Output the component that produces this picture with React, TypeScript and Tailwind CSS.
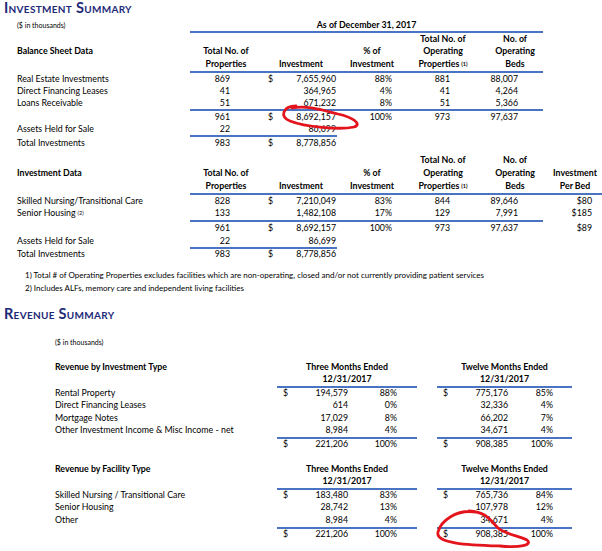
import React from "react";

// investment tables: pad | label | properties | $ investment | % | op. properties | beds | per bed
const ICOLS = "grid grid-cols-[17px_173px_72px_78px_64px_78px_66px_54px] items-center";
// revenue tables: pad | label | 3m value | 3m % | gap | 12m value | 12m % | pad
const RCOLS = "grid grid-cols-[55px_222px_71px_69px_20px_71px_64px_30px] items-center";

const line = "bg-[#4a73c4]";

function Sup({ n }: { n: string }) {
  return <sup className="text-[5.5px] relative -top-[1px] ml-[2px]">{n}</sup>;
}

function InvRow({ h, label, props, dollar, inv, pct, opp, beds, perBed }: any) {
  return (
    <div className={`${ICOLS} ${h}`}>
      <div />
      <div>{label}</div>
      <div className="text-right pr-[32px]">{props}</div>
      <div className="flex justify-between pl-[6px] pr-[4px]">
        <span>{dollar}</span>
        <span>{inv}</span>
      </div>
      <div className="text-right pr-[12px]">{pct}</div>
      <div className="text-right pr-[32px]">{opp}</div>
      <div className="text-right pr-[30px]">{beds}</div>
      <div className="text-right pr-[10px]">{perBed}</div>
    </div>
  );
}

function HeadRow({ h, cells }: { h: string; cells: React.ReactNode[] }) {
  return (
    <div className={`${ICOLS} ${h} font-bold`}>
      <div />
      <div>{cells[0]}</div>
      {cells.slice(1).map((c, i) => (
        <div key={i} className="text-center">{c}</div>
      ))}
    </div>
  );
}

function RevRow({ h, label, d1, v1, p1, d2, v2, p2 }: any) {
  return (
    <div className={`${RCOLS} ${h}`}>
      <div />
      <div>{label}</div>
      <div className="flex justify-between pl-[6px]">
        <span>{d1}</span>
        <span>{v1}</span>
      </div>
      <div className="text-right pr-[20px]">{p1}</div>
      <div />
      <div className="flex justify-between pl-[6px]">
        <span>{d2}</span>
        <span>{v2}</span>
      </div>
      <div className="text-right pr-[19px]">{p2}</div>
      <div />
    </div>
  );
}

function RevHead({ label, top, bottom }: { label?: string; top: string; bottom: string }) {
  return (
    <>
      <div className={`${RCOLS} h-[12px] font-bold`}>
        <div />
        <div>{label}</div>
        <div className="col-span-2 text-center">{top}</div>
        <div />
        <div className="col-span-2 text-center">{bottom}</div>
        <div />
      </div>
      <div className={`${RCOLS} h-[13px] font-bold`}>
        <div />
        <div />
        <div className="col-span-2 text-center">12/31/2017</div>
        <div />
        <div className="col-span-2 text-center">12/31/2017</div>
        <div />
      </div>
    </>
  );
}

function RevLine() {
  return (
    <div className="flex h-[2px]">
      <div className={`ml-[277px] w-[140px] ${line}`} />
      <div className={`ml-[20px] w-[135px] ${line}`} />
    </div>
  );
}

function Title({ text }: { text: string }) {
  return (
    <div className="h-[15px] flex items-center pl-[4px] text-[14.5px] leading-[15px] font-bold [font-variant:small-caps] text-[#1e2a78] tracking-[0.3px]">
      {text}
    </div>
  );
}

export default function App() {
  return (
    <div className="relative w-[602px] h-[551px] overflow-hidden bg-white text-black text-[8.8px] leading-none font-['Lato','Open_Sans',sans-serif]">
      <Title text="Investment Summary" />

      {/* Balance sheet data */}
      <div className={`${ICOLS} h-[12px] mt-[4px]`}>
        <div />
        <div className="text-[7px]">($ in thousands)</div>
        <div className="col-span-5 text-center font-bold pr-[5px]">As of December 31, 2017</div>
        <div />
      </div>
      <div className={`h-[2px] ml-[190px] w-[353px] ${line}`} />
      <HeadRow h="h-[12px]" cells={["", "", "", "", "Total No. of", "No. of", ""]} />
      <HeadRow h="h-[13px]" cells={["Balance Sheet Data", "Total No. of", "", "% of", "Operating", "Operating", ""]} />
      <HeadRow
        h="h-[13px]"
        cells={["", "Properties", "Investment", "Investment", <span>Properties<Sup n="(1)" /></span>, "Beds", ""]}
      />
      <div className={`h-[2px] ml-[190px] w-[353px] ${line}`} />
      <InvRow h="h-[12px]" label="Real Estate Investments" props="869" dollar="$" inv="7,655,960" pct="88%" opp="881" beds="88,007" />
      <InvRow h="h-[12px]" label="Direct Financing Leases" props="41" inv="364,965" pct="4%" opp="41" beds="4,264" />
      <InvRow h="h-[12px]" label="Loans Receivable" props="51" inv="671,232" pct="8%" opp="51" beds="5,366" />
      <div className={`h-[2px] ml-[190px] w-[353px] ${line}`} />
      <InvRow h="h-[12px]" props="961" dollar="$" inv="8,692,157" pct="100%" opp="973" beds="97,637" />
      <InvRow h="h-[12px]" label="Assets Held for Sale" props="22" inv="86,699" />
      <div className={`h-[2px] ml-[190px] w-[147px] ${line}`} />
      <InvRow h="h-[12px]" label="Total Investments" props="983" dollar="$" inv="8,778,856" />

      {/* Investment data */}
      <div className="h-[5px]" />
      <HeadRow h="h-[12px]" cells={["", "", "", "", "Total No. of", "No. of", ""]} />
      <HeadRow h="h-[14px]" cells={["Investment Data", "Total No. of", "", "% of", "Operating", "Operating", "Investment"]} />
      <HeadRow
        h="h-[13px]"
        cells={["", "Properties", "Investment", "Investment", <span>Properties<Sup n="(1)" /></span>, "Beds", "Per Bed"]}
      />
      <div className={`h-[2px] ml-[190px] w-[412px] ${line}`} />
      <InvRow h="h-[12px]" label="Skilled Nursing/Transitional Care" props="828" dollar="$" inv="7,210,049" pct="83%" opp="844" beds="89,646" perBed="$80" />
      <InvRow
        h="h-[13px]"
        label={<span>Senior Housing<Sup n="(2)" /></span>}
        props="133"
        inv="1,482,108"
        pct="17%"
        opp="129"
        beds="7,991"
        perBed="$185"
      />
      <div className={`h-[2px] ml-[190px] w-[353px] ${line}`} />
      <InvRow h="h-[13px]" props="961" dollar="$" inv="8,692,157" pct="100%" opp="973" beds="97,637" perBed="$89" />
      <InvRow h="h-[12px]" label="Assets Held for Sale" props="22" inv="86,699" />
      <div className={`h-[2px] ml-[190px] w-[147px] ${line}`} />
      <InvRow h="h-[10px]" label="Total Investments" props="983" dollar="$" inv="8,778,856" />

      <div className="mt-[10px] pl-[25px] text-[8px] h-[12px] flex items-center">
        1) Total # of Operating Properties excludes facilities which are non-operating, closed and/or not currently providing patient services
      </div>
      <div className="pl-[25px] text-[8px] h-[13px] flex items-center">
        2) Includes ALFs, memory care and independent living facilities
      </div>

      {/* Revenue summary */}
      <div className="h-[12px]" />
      <Title text="Revenue Summary" />
      <div className="mt-[15px] h-[12px] pl-[55px] text-[7px] flex items-center">($ in thousands)</div>

      <div className="h-[13px]" />
      <RevHead label="Revenue by Investment Type" top="Three Months Ended" bottom="Twelve Months Ended" />
      <RevLine />
      <RevRow h="h-[11px]" label="Rental Property" d1="$" v1="194,579" p1="88%" d2="$" v2="775,176" p2="85%" />
      <RevRow h="h-[13px]" label="Direct Financing Leases" v1="614" p1="0%" v2="32,336" p2="4%" />
      <RevRow h="h-[12px]" label="Mortgage Notes" v1="17,029" p1="8%" v2="66,202" p2="7%" />
      <RevRow h="h-[13px]" label="Other Investment Income & Misc Income - net" v1="8,984" p1="4%" v2="34,671" p2="4%" />
      <RevLine />
      <RevRow h="h-[10px]" d1="$" v1="221,206" p1="100%" d2="$" v2="908,385" p2="100%" />

      <div className="h-[14px]" />
      <RevHead label="Revenue by Facility Type" top="Three Months Ended" bottom="Twelve Months Ended" />
      <RevLine />
      <RevRow h="h-[11px]" label="Skilled Nursing / Transitional Care" d1="$" v1="183,480" p1="83%" d2="$" v2="765,736" p2="84%" />
      <RevRow h="h-[13px]" label="Senior Housing" v1="28,742" p1="13%" v2="107,978" p2="12%" />
      <RevRow h="h-[13px]" label="Other" v1="8,984" p1="4%" v2="34,671" p2="4%" />
      <RevLine />
      <RevRow h="h-[10px]" d1="$" v1="221,206" p1="100%" d2="$" v2="908,385" p2="100%" />

      {/* hand-drawn red marks over the totals */}
      <svg className="absolute inset-0 pointer-events-none" width="602" height="551" viewBox="0 0 602 551">
        <path
          d="M 296 106 C 283 106, 279 117, 290 121 C 305 127, 340 130, 354 127 C 363 124, 352 117, 338 114 C 322 110, 307 105, 292 108"
          fill="none"
          stroke="#e3141c"
          strokeWidth="2.8"
          strokeLinecap="round"
        />
        <path
          d="M 476 512 C 456 509, 441 521, 438 532 C 435 544, 470 545, 500 546 C 520 548, 533 545, 527 540 C 519 536, 505 534, 498 528 C 490 520, 487 512, 469 511"
          fill="none"
          stroke="#e3141c"
          strokeWidth="2.8"
          strokeLinecap="round"
        />
      </svg>
    </div>
  );
}
